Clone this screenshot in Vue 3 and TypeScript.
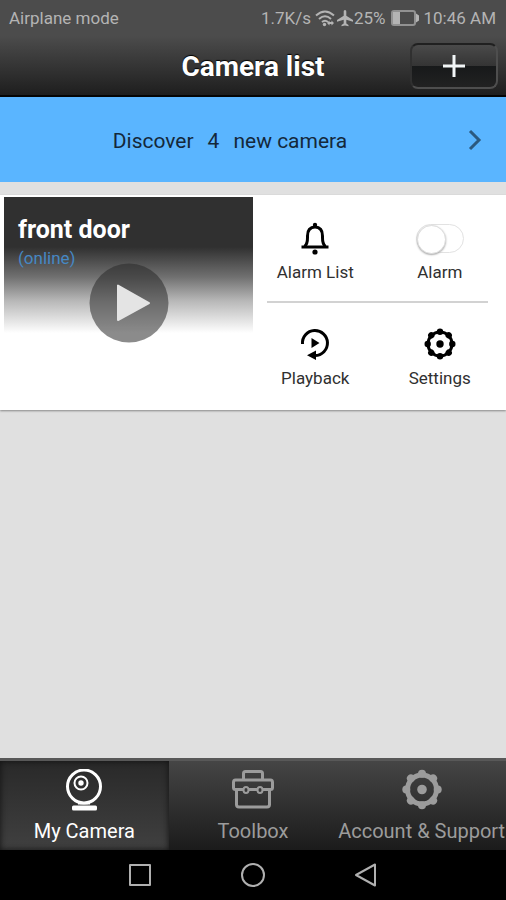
<script setup lang="ts">
import { ref } from 'vue'

type TabId = 'camera' | 'toolbox' | 'account'

const newCameras = ref<number>(4)
const alarmOn = ref<boolean>(false)
const activeTab = ref<TabId>('camera')

const tabs: { id: TabId; label: string }[] = [
  { id: 'camera', label: 'My Camera' },
  { id: 'toolbox', label: 'Toolbox' },
  { id: 'account', label: 'Account & Support' },
]

const gearAngles: number[] = [0, 45, 90, 135, 180, 225, 270, 315]
</script>

<template>
  <div class="screen">
    <header class="top">
      <div class="status">
        <span>Airplane mode</span>
        <div class="status-right">
          <span>1.7K/s</span>
          <svg class="wifi" viewBox="0 0 20 18" aria-hidden="true">
            <path d="M1 6.500Q10-1.500 19 6.500M4 10Q10 4.500 16 10M7 13Q10 10.500 13 13" />
            <circle cx="9.500" cy="15.500" r="1.700" />
            <path class="solid" d="M12 14l2.500-2.500v1.500h2v-1.500L19 14l-2.500 2.500V15h-2v1.500z" />
          </svg>
          <svg class="plane" viewBox="0 0 18 18" aria-hidden="true">
            <path d="M9 1c-.9 0-1.300.8-1.300 1.800v4L1 11v1.800l6.700-2v3.700L5.500 16v1.300L9 16.400l3.500.9V16l-2.200-1.500v-3.700l6.700 2V11l-6.700-4.200v-4C10.300 1.800 9.900 1 9 1z" />
          </svg>
          <span>25%</span>
          <svg class="battery" viewBox="0 0 28 16" aria-hidden="true">
            <rect x="1" y="1" width="23" height="14" rx="2" />
            <path class="solid" d="M2 2h7v12H2zM25 3.500l3 2v5l-3 2z" />
          </svg>
          <span>10:46 AM</span>
        </div>
      </div>
      <div class="title-bar">
        <h1>Camera list</h1>
        <button class="add" type="button" aria-label="Add camera">
          <svg viewBox="0 0 22 22" aria-hidden="true"><path d="M11 0v22M0 11h22" /></svg>
        </button>
      </div>
    </header>

    <main>
      <button class="discover" type="button">
        <span class="discover-text">
          <span>Discover</span><span>{{ newCameras }}</span><span>new camera</span>
        </span>
        <svg viewBox="0 0 14 22" aria-hidden="true"><path d="M2 2l9 9-9 9" /></svg>
      </button>

      <section class="card">
        <div class="preview">
          <h2>front door</h2>
          <p>(online)</p>
          <button class="play" type="button" aria-label="Play front door">
            <svg viewBox="0 0 80 80" aria-hidden="true">
              <circle cx="40" cy="40" r="39.500" />
              <path d="M29 22.500v34.500L60 40z" />
            </svg>
          </button>
        </div>
        <div class="actions">
          <div class="row">
            <button class="action" type="button">
              <svg viewBox="0 0 32 32" aria-hidden="true">
                <path class="line" d="M5.500 24.500C9 22 8.500 18 8.500 14c0-6 3-9 7.500-9s7.500 3 7.500 9c0 4-.5 8 3 10.500" />
                <path class="line" d="M2.500 25h27" />
                <circle cx="16" cy="3" r="2.200" />
                <circle cx="16" cy="30" r="2.600" />
              </svg>
              <span>Alarm List</span>
            </button>
            <label class="action">
              <span class="switch">
                <input v-model="alarmOn" type="checkbox" role="switch" />
              </span>
              <span>Alarm</span>
            </label>
          </div>
          <div class="row">
            <button class="action" type="button">
              <svg viewBox="0 0 32 32" aria-hidden="true">
                <path class="line" d="M3.500 16A12.500 12.500 0 1 1 16 27.500" />
                <path d="M17 22.500v9.500l-9-4.700zM12.500 10v10l8-5z" />
              </svg>
              <span>Playback</span>
            </button>
            <button class="action" type="button">
              <svg viewBox="0 0 32 32" aria-hidden="true">
                <circle class="line" cx="16" cy="16" r="12" />
                <circle cx="16" cy="16" r="3.700" />
                <circle v-for="a in gearAngles" :key="a" cx="16" cy="3.700" r="3.200" :transform="`rotate(${a} 16 16)`" />
              </svg>
              <span>Settings</span>
            </button>
          </div>
        </div>
      </section>
    </main>

    <nav class="tabs" aria-label="Sections">
      <button
        v-for="tab in tabs"
        :key="tab.id"
        type="button"
        class="tab"
        :class="{ active: tab.id === activeTab }"
        @click="activeTab = tab.id"
      >
        <svg v-if="tab.id === 'camera'" viewBox="0 0 44 44" aria-hidden="true">
          <circle class="line" cx="22" cy="17.500" r="16.500" />
          <circle class="thin" cx="19" cy="14" r="6.500" />
          <circle cx="19" cy="14" r="2.700" />
          <path d="M16 33h12v2.500H16z" />
          <rect x="10" y="36.500" width="25" height="5" rx="1.500" />
        </svg>
        <svg v-else-if="tab.id === 'toolbox'" viewBox="0 0 44 44" aria-hidden="true">
          <path class="line" d="M12.500 11V4.500q0-2 2-2h15q2 0 2 2V11" />
          <path class="line" d="M12.500 20.500H4.500q-2 0-2-2v-5q0-2.500 2-2.500h35q2 0 2 2.500v5q0 2-2 2H31.500M17.500 20.500h9M5.500 21v14.500q0 2.500 2.500 2.500h28q2.500 0 2.500-2.500V21" />
          <ellipse class="thin" cx="15" cy="21" rx="2.500" ry="3" />
          <ellipse class="thin" cx="29" cy="21" rx="2.500" ry="3" />
        </svg>
        <svg v-else viewBox="0 0 44 44" aria-hidden="true">
          <circle class="ring" cx="22" cy="20.500" r="14.500" />
          <circle cx="22" cy="20.500" r="4.800" />
          <circle v-for="a in gearAngles" :key="a" cx="22" cy="4.800" r="4" :transform="`rotate(${a} 22 20.5)`" />
        </svg>
        <span>{{ tab.label }}</span>
      </button>
    </nav>

    <nav class="system" aria-label="System">
      <button type="button" aria-label="Recent apps">
        <svg viewBox="0 0 24 24" aria-hidden="true"><path d="M2 2h20v20H2z" /></svg>
      </button>
      <button type="button" aria-label="Home">
        <svg viewBox="0 0 24 24" aria-hidden="true"><circle cx="12" cy="12" r="11" /></svg>
      </button>
      <button type="button" aria-label="Back">
        <svg viewBox="0 0 24 24" aria-hidden="true"><path d="M21 1.500v21L2 12z" /></svg>
      </button>
    </nav>
  </div>
</template>

<style>
body {
  margin: 0;
}
</style>

<style scoped>
.screen {
  display: flex;
  flex-direction: column;
  min-height: 100vh;
  background: #e0e0e0;
  font-family: Roboto, "Liberation Sans", sans-serif;
}

.screen * {
  box-sizing: border-box;
}

button {
  margin: 0;
  padding: 0;
  border: 0;
  background: none;
  color: inherit;
  font: inherit;
}

svg {
  display: block;
  flex: none;
}

.top {
  background: linear-gradient(#4c4c4c 0, #4c4c4c 36px, #1e1e1e 100%);
  border-bottom: 2px solid #050505;
}

.status {
  display: flex;
  align-items: center;
  justify-content: space-between;
  height: 36px;
  padding: 0 10px 0 9px;
  color: #b4b4b4;
  font-size: 17px;
}

.status-right {
  display: flex;
  align-items: center;
}

.status svg {
  fill: #b4b4b4;
}

.wifi {
  width: 20px;
  height: 18px;
  margin-left: 4px;
}

.wifi path {
  fill: none;
  stroke: #b4b4b4;
  stroke-width: 2;
}

.wifi .solid {
  fill: #b4b4b4;
  stroke: none;
}

.plane {
  width: 18px;
  height: 18px;
  margin-left: 1px;
}

.battery {
  width: 28px;
  height: 16px;
  margin: 0 5px;
}

.battery rect {
  fill: none;
  stroke: #929292;
  stroke-width: 2;
}

.title-bar {
  display: grid;
  grid-template-columns: 88px 1fr 88px;
  align-items: center;
  height: 59px;
  padding: 0 8px;
}

h1 {
  grid-column: 2;
  margin: 0;
  padding-top: 2px;
  color: #fff;
  font-size: 28px;
  font-weight: 700;
  line-height: 32px;
  text-align: center;
  text-shadow: 0 -1px 1px #000;
}

.add {
  display: grid;
  place-items: center;
  height: 46px;
  border: 2px solid #4e4e4e;
  border-top-color: #202020;
  border-left-color: #303030;
  border-radius: 8px;
  background: linear-gradient(#4a4a4a, #343434 50%, #17191a 50%, #222 100%);
}

.add svg {
  width: 22px;
  height: 22px;
  stroke: #f2f6f7;
  stroke-width: 3;
}

main {
  flex: 1;
}

.discover {
  display: flex;
  align-items: center;
  gap: 8px;
  width: 100%;
  height: 85px;
  padding: 0 24px 0 0;
  background: #5ab5ff;
  color: #14283a;
  font-size: 21px;
  font-weight: 400;
}

.discover-text {
  display: flex;
  flex: 1;
  justify-content: center;
  gap: 14px;
  padding-top: 2px;
}

.discover svg {
  width: 14px;
  height: 22px;
  fill: none;
  stroke: #2b597f;
  stroke-width: 3;
}

.card {
  display: grid;
  grid-template-columns: 1fr 1fr;
  margin-top: 13px;
  padding: 2px 0 1px;
  background: #fff;
  box-shadow: 0 1px 2px #888;
}

.preview {
  display: flex;
  flex-direction: column;
  align-items: flex-start;
  margin-left: 4px;
  padding: 18px 14px 0;
  background: linear-gradient(#303030 0, #303030 50px, #707070 80px, #b8b8b8 104px, #fff 136px);
}

h2 {
  margin: 0;
  color: #fff;
  font-size: 25px;
  font-weight: 700;
  line-height: 30px;
}

.preview p {
  margin: 0;
  color: #4688c4;
  font-size: 17px;
  line-height: 26px;
}

.play {
  align-self: center;
  margin-top: -8px;
}

.play svg {
  width: 80px;
  height: 80px;
}

.play circle {
  fill: rgb(40 40 40 / 54%);
}

.play path {
  fill: #e4e4e4;
  stroke: #e4e4e4;
  stroke-width: 2;
  stroke-linejoin: round;
}

.actions {
  padding-right: 4px;
}

.row {
  display: grid;
  grid-template-columns: 1fr 1fr;
  height: 106px;
}

.row + .row {
  position: relative;
}

.row + .row::before {
  position: absolute;
  top: -2px;
  right: 14px;
  left: 14px;
  height: 2px;
  background: #d2d2d2;
  content: "";
}

.action {
  display: flex;
  flex-direction: column;
  align-items: center;
  gap: 6px;
  padding-top: 25px;
  color: #303030;
  font-size: 17px;
  line-height: 24px;
}

.action svg {
  width: 32px;
  height: 32px;
  overflow: visible;
  fill: #000;
}

.action .line {
  fill: none;
  stroke: #000;
  stroke-width: 3;
}

.switch {
  display: flex;
  align-items: center;
  height: 32px;
}

.switch input {
  display: block;
  width: 48px;
  height: 29px;
  margin: 0;
  border: 1px solid #e2e2e2;
  border-radius: 15px;
  appearance: none;
  background: #fff;
}

.switch input::before {
  display: block;
  width: 27px;
  height: 27px;
  border: 1px solid #ddd;
  border-radius: 50%;
  background: #fff;
  box-shadow: 0 1px 2px #aaa;
  content: "";
}

.switch input:checked {
  background: #5ab5ff;
}

.switch input:checked::before {
  margin-left: auto;
}

.tabs {
  display: grid;
  grid-template-columns: repeat(3, minmax(0, 1fr));
  height: 92px;
  border-top: 3px solid #585858;
  background: linear-gradient(#454545, #1b1b1b);
}

.tab {
  display: flex;
  flex-direction: column;
  align-items: center;
  gap: 5px;
  padding-top: 8px;
  color: #9c9c9c;
  font-size: 20px;
  line-height: 26px;
  white-space: nowrap;
}

.tab svg {
  width: 44px;
  height: 44px;
  fill: currentColor;
}

.tab .line,
.tab .thin,
.tab .ring {
  fill: none;
  stroke: currentColor;
  stroke-width: 3;
}

.tab .thin {
  stroke-width: 2;
}

.tab .ring {
  stroke-width: 5;
}

.tab.active {
  background: linear-gradient(#292929, #404040);
  box-shadow: inset 0 0 6px #111;
  color: #fff;
}

.system {
  display: flex;
  justify-content: center;
  gap: 89px;
  height: 50px;
  background: #000;
}

.system svg {
  width: 24px;
  height: 24px;
  fill: none;
  stroke: #b0b0b0;
  stroke-width: 2;
  stroke-linejoin: round;
}
</style>
